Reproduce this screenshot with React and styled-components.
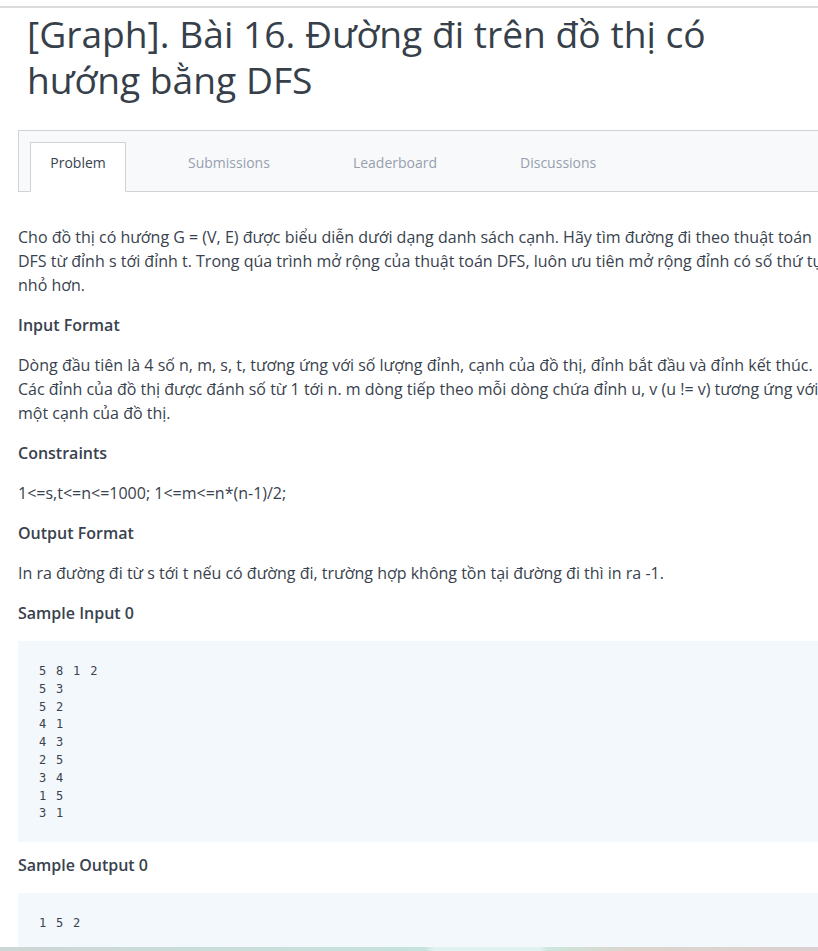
import React from "react";
import styled, { createGlobalStyle } from "styled-components";

const GlobalStyle = createGlobalStyle`
  html, body {
    margin: 0;
    padding: 0;
    background: #fff;
    overflow: hidden;
  }
  body {
    font-family: "Open Sans", "Noto Sans", sans-serif;
    color: #39424e;
  }
`;

const tabs = ["Problem", "Submissions", "Leaderboard", "Discussions"];

const sampleInput = `5 8 1 2
5 3
5 2
4 1
4 3
2 5
3 4
1 5
3 1`;

const App = () => {
  return (
    <Page>
      <GlobalStyle />
      <TopRule />
      <Content>
        <Title>[Graph]. Bài 16. Đường đi trên đồ thị có hướng bằng DFS</Title>
        <TabBar>
          {tabs.map((t, i) => (
            <Tab key={t} active={i === 0}>
              {t}
            </Tab>
          ))}
        </TabBar>
        <Body>
          <Text>
            Cho đồ thị có hướng G = (V, E) được biểu diễn dưới dạng danh sách cạnh. Hãy tìm đường đi theo
            thuật toán DFS từ đỉnh s tới đỉnh t. Trong qúa trình mở rộng của thuật toán DFS, luôn ưu tiên mở
            rộng đỉnh có số thứ tự nhỏ hơn.
          </Text>
          <Heading>Input Format</Heading>
          <Text>
            Dòng đầu tiên là 4 số n, m, s, t, tương ứng với số lượng đỉnh, cạnh của đồ thị, đỉnh bắt đầu và
            đỉnh kết thúc. Các đỉnh của đồ thị được đánh số từ 1 tới n. m dòng tiếp theo mỗi dòng chứa đỉnh
            u, v (u != v) tương ứng với một cạnh của đồ thị.
          </Text>
          <Heading>Constraints</Heading>
          <Text>1&lt;=s,t&lt;=n&lt;=1000; 1&lt;=m&lt;=n*(n-1)/2;</Text>
          <Heading>Output Format</Heading>
          <Text>In ra đường đi từ s tới t nếu có đường đi, trường hợp không tồn tại đường đi thì in ra -1.</Text>
          <Heading>Sample Input 0</Heading>
          <Code>{sampleInput}</Code>
          <Heading spaced>Sample Output 0</Heading>
          <Code tall>1 5 2</Code>
        </Body>
      </Content>
      <BottomStrip />
    </Page>
  );
};

export default App;

const Page = styled.div`
  width: 818px;
  height: 951px;
  overflow: hidden;
`;

const TopRule = styled.div`
  height: 6px;
  border-bottom: 2px solid #dcdcdc;
`;

const Content = styled.div`
  width: 822px;
  padding-left: 18px;
`;

const Title = styled.h1`
  margin: 3px 0 0 9px;
  font-size: 37.2px;
  font-weight: 400;
  line-height: 46px;
  color: #363f4a;
  width: 700px;
`;

const TabBar = styled.div`
  display: flex;
  align-items: flex-end;
  gap: 41px;
  margin-top: 27px;
  height: 60px;
  padding-left: 11px;
  background: #f8f9fa;
  border: 1px solid #cfd3d8;
  border-right: none;
`;

const Tab = styled.div`
  height: 50px;
  padding: 10px 20px 0;
  margin-bottom: -1px;
  display: flex;
  align-items: flex-start;
  justify-content: center;
  font-size: 14px;
  line-height: 20px;
  color: ${(p) => (p.active ? "#39424e" : "#979faf")};
  background: ${(p) => (p.active ? "#fff" : "transparent")};
  border: 1px solid ${(p) => (p.active ? "#cfd3d8" : "transparent")};
  border-bottom-color: ${(p) => (p.active ? "#fff" : "transparent")};
  box-sizing: border-box;
  width: ${(p) => (p.active ? "96px" : "auto")};
`;

const Body = styled.div`
  display: flex;
  flex-direction: column;
  gap: 16px;
  margin-top: 33px;
`;

const Text = styled.p`
  margin: 0;
  font-size: 16px;
  line-height: 24px;
  color: #39424e;
`;

const Heading = styled.h3`
  margin: ${(p) => (p.spaced ? "-5px" : "0")} 0 0;
  font-size: 16px;
  font-weight: 600;
  line-height: 24px;
  color: #39424e;
`;

const Code = styled.pre`
  margin: 0;
  padding: 22px 21px 19px;
  height: ${(p) => (p.tall ? "54px" : "auto")};
  background: #f3f8fd;
  font-family: "DejaVu Sans Mono", monospace;
  font-size: 12px;
  letter-spacing: 1.3px;
  line-height: 17.8px;
  color: #39424e;
`;

const BottomStrip = styled.div`
  position: fixed;
  left: 0;
  bottom: 0;
  width: 818px;
  height: 4px;
  background: linear-gradient(
    90deg,
    #cdd6d4 0%,
    #c6e3dd 52%,
    #e0f1ef 53%,
    #e0f1ef 66%,
    #cde6dc 67%,
    #dcd3cc 78%,
    #dcd0d2 100%
  );
`;
